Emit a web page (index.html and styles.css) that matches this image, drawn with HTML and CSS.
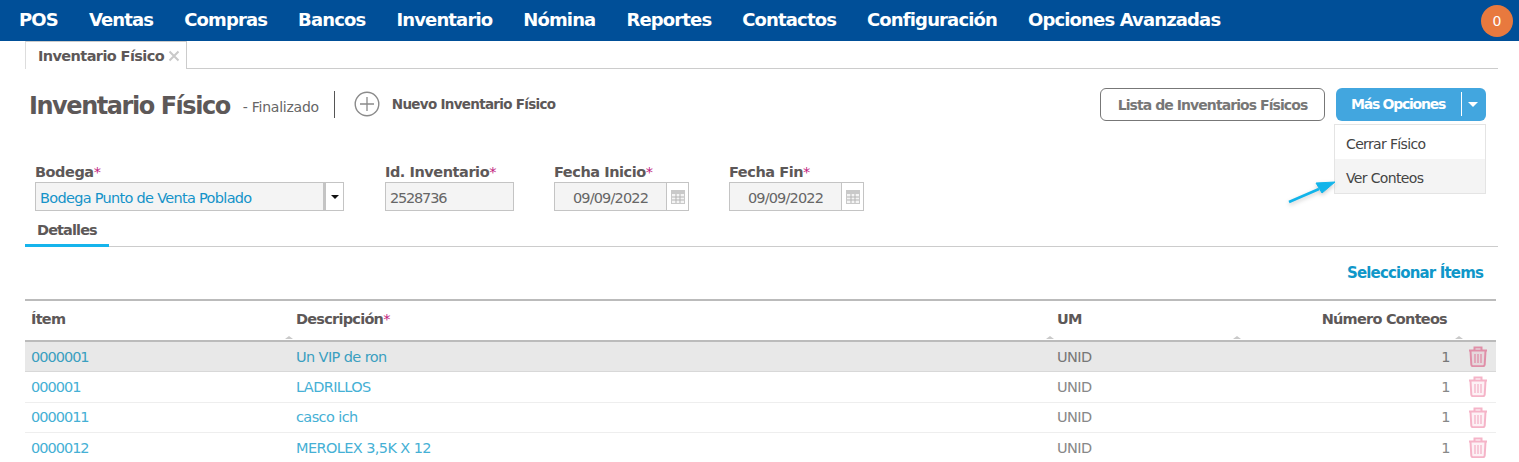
FILE: index.html
```html
<!DOCTYPE html>
<html lang="es">
<head>
<meta charset="utf-8">
<title>Inventario Físico</title>
<link rel="stylesheet" href="styles.css">
</head>
<body>
<nav class="topnav">
  <a>POS</a><a>Ventas</a><a>Compras</a><a>Bancos</a><a>Inventario</a><a>Nómina</a><a>Reportes</a><a>Contactos</a><a>Configuración</a><a>Opciones Avanzadas</a>
  <span class="badge">0</span>
</nav>
<div class="tabbar"><div class="tab">Inventario Físico <svg class="tab-x" viewBox="0 0 12 12" width="12" height="12"><path d="M1.5 1.500l9 9M10.500 1.500l-9 9" stroke="#c9c9c9" stroke-width="2" fill="none"/></svg></div></div>
<header class="head">
  <h1>Inventario Físico</h1>
  <span class="status">- Finalizado</span>
  <span class="sep"></span>
  <svg class="plus" viewBox="0 0 26 26" width="26" height="26"><circle cx="13" cy="13" r="11.800" fill="none" stroke="#8a8a8a" stroke-width="1.400"/><path d="M13 6v14M6 13h14" stroke="#8a8a8a" stroke-width="1.300"/></svg>
  <span class="new">Nuevo Inventario Físico</span>
  <span class="head-actions">
    <button class="btn-outline">Lista de Inventarios Físicos</button>
    <span class="split"><span class="split-label">Más Opciones</span><span class="split-div"></span><span class="caret-w"></span></span>
  </span>
  <div class="menu">
    <div class="menu-item">Cerrar Físico</div>
    <div class="menu-item hover">Ver Conteos</div>
  </div>
  <svg class="arrow" viewBox="0 0 52 26" width="52" height="26"><path d="M2 24L32 11" stroke="#12b4ea" stroke-width="2.600" fill="none"/><path d="M48 4L29 5L35 15Z" fill="#12b4ea" stroke="#12b4ea" stroke-width="1"/></svg>
</header>
<section class="form">
  <div class="field f-bodega">
    <label>Bodega<i>*</i></label>
    <div class="ctl"><span class="val link">Bodega Punto de Venta Poblado</span><span class="sel"><b></b></span></div>
  </div>
  <div class="field f-id">
    <label>Id. Inventario<i>*</i></label>
    <div class="ctl"><span class="val num">2528736</span></div>
  </div>
  <div class="field f-date">
    <label>Fecha Inicio<i>*</i></label>
    <div class="ctl"><span class="val c">09/09/2022</span><span class="cal"><svg viewBox="0 0 14 14" width="14" height="14"><path d="M0 0h14v14H0z" fill="#c9c9c9"/><path d="M1 4h12v9H1z" fill="#f4f4f4"/><path d="M1 7h12M1 10h12M5 4v9M9 4v9" stroke="#b5b5b5"/></svg></span></div>
  </div>
  <div class="field f-date">
    <label>Fecha Fin<i>*</i></label>
    <div class="ctl"><span class="val c">09/09/2022</span><span class="cal"><svg viewBox="0 0 14 14" width="14" height="14"><path d="M0 0h14v14H0z" fill="#c9c9c9"/><path d="M1 4h12v9H1z" fill="#f4f4f4"/><path d="M1 7h12M1 10h12M5 4v9M9 4v9" stroke="#b5b5b5"/></svg></span></div>
  </div>
</section>
<div class="subtabs"><span class="subtab">Detalles</span></div>
<div class="select-row"><a>Seleccionar Ítems</a></div>
<table class="grid">
  <colgroup><col class="c1"><col class="c2"><col class="c3"><col class="c4"><col class="c5"></colgroup>
  <thead>
    <tr><th>Ítem<s></s></th><th>Descripción<i>*</i><s></s></th><th>UM<s></s></th><th class="r">Número Conteos<s></s></th><th></th></tr>
  </thead>
  <tbody>
    <tr class="on"><td class="link num">0000001</td><td class="link">Un VIP de ron</td><td>UNID</td><td class="r">1</td><td><svg class="trash"><use href="#t"/></svg></td></tr>
    <tr><td class="link num">000001</td><td class="link">LADRILLOS</td><td>UNID</td><td class="r">1</td><td><svg class="trash"><use href="#t"/></svg></td></tr>
    <tr><td class="link num">0000011</td><td class="link">casco ich</td><td>UNID</td><td class="r">1</td><td><svg class="trash"><use href="#t"/></svg></td></tr>
    <tr><td class="link num">0000012</td><td class="link">MEROLEX 3,5K X 12</td><td>UNID</td><td class="r">1</td><td><svg class="trash"><use href="#t"/></svg></td></tr>
  </tbody>
</table>
<svg class="defs" width="0" height="0"><symbol id="t" viewBox="0 0 20 21"><path d="M1 4.500h18M6.500 4V1.500h7V4" fill="none" stroke="currentColor" stroke-width="2"/><path d="M2.500 5l.8 13.500q.1 1.700 1.800 1.700h9.800q1.700 0 1.800-1.700L17.500 5" fill="currentColor" fill-opacity=".18" stroke="currentColor" stroke-width="2"/><path d="M7 8v9M10 8v9M13 8v9" stroke="currentColor" stroke-width="1.300"/></symbol></svg>
</body>
</html>
```
FILE: styles.css
```css
* { box-sizing: border-box; }
html, body { margin: 0; height: 462px; overflow: hidden; background: #fff; }
body { font-family: "DejaVu Sans", sans-serif; font-size: 14px; color: #666; letter-spacing: -0.65px; }

.topnav { height: 41px; background: #004f98; display: flex; align-items: center; gap: 31px; padding: 0 6px 2px 19px; position: relative; }
.topnav a { color: #fff; font-size: 18px; font-weight: 700; letter-spacing: -0.86px; }
.badge { margin-left: auto; width: 32px; height: 32px; border-radius: 50%; background: #e8793e; color: #fff; font-size: 14px; display: flex; align-items: center; justify-content: center; margin-top: 2px; letter-spacing: 0; }

.tabbar { height: 28px; margin: 0 21px 0 25px; border-bottom: 1px solid #ccc; }
.tab { width: 162px; height: 28px; border: 1px solid #ccc; border-bottom: 0; border-left-color: #ddd; background: #fff; padding: 1px 0 0 12px; font-size: 14.500px; font-weight: 700; color: #5d5858; letter-spacing: -0.6px; display: flex; align-items: center; gap: 4px; }
.tab-x { margin-top: -1px; }

.head { position: relative; height: 93px; display: flex; align-items: flex-start; padding: 19px 33px 0 29px; }
.head h1 { margin: 0; font-size: 24px; line-height: 36px; font-weight: 700; color: #5d5858; letter-spacing: -1.450px; }
.status { margin: 9px 0 0 13px; line-height: 20px; color: #666; font-size: 14px; letter-spacing: -0.25px; }
.sep { width: 1px; height: 27px; background: #555; margin: 3px 19px 0 15px; }
.plus { margin-top: 3px; }
.new { margin: 6px 0 0 12px; line-height: 20px; font-size: 13.500px; font-weight: 700; color: #5d5858; letter-spacing: -0.7px; }
.head-actions { margin-left: auto; display: flex; gap: 11px; }
.btn-outline { width: 225px; height: 33px; border: 1px solid #777; border-radius: 6px; background: #fff; font: 700 14px "DejaVu Sans", sans-serif; letter-spacing: -0.93px; color: #777; padding: 0; }
.split { width: 150px; height: 33px; background: #42a6df; border-radius: 6px; display: flex; align-items: center; color: #fff; font-weight: 700; font-size: 14px; letter-spacing: -1.250px; padding-bottom: 1px; }
.split-label { margin-left: 15px; width: 110px; }
.split-div { width: 1px; height: 24px; background: #fff; }
.caret-w { width: 0; height: 0; border: 5px solid transparent; border-top-color: #fff; border-bottom: 0; margin-left: 6px; }
.menu { position: absolute; top: 55px; right: 33px; width: 152px; height: 70px; border: 1px solid #e4e4e4; background: #fff; color: #444; z-index: 2; }
.menu-item { height: 34px; padding: 3px 0 0 11px; line-height: 32px; }
.menu-item.hover { background: #f4f4f4; }
.arrow { position: absolute; top: 109px; left: 1287px; z-index: 3; filter: drop-shadow(0 2px 2px rgba(0, 0, 0, .2)); }

.form { display: flex; padding-left: 35px; height: 50px; }
.field label { display: block; height: 20px; line-height: 20px; font-weight: 700; font-size: 14.500px; color: #5d5858; letter-spacing: -0.45px; }
.field i, .grid i { color: #c2237e; font-style: normal; font-weight: 400; }
.ctl { display: flex; height: 29px; border: 1px solid #c4c4c4; background: #fff; }
.val { flex: 1; background: #f4f4f4; padding: 3px 0 0 4px; line-height: 25px; font-size: 14.500px; letter-spacing: -0.7px; }
.val.num { letter-spacing: -1.200px; }
.val.c { text-align: center; border-right: 1px solid #c4c4c4; padding-left: 0; letter-spacing: -0.85px; }
.val.link { color: #1593c9; border-right: 3px solid #c4c4c4; }
.f-bodega { width: 309px; margin-right: 41px; }
.f-id { width: 129px; margin-right: 40px; }
.f-date { width: 135px; margin-right: 40px; }
.f-date .ctl { width: 135px; }
.sel { width: 17px; display: flex; align-items: center; justify-content: center; }
.sel b { border: 4px solid transparent; border-top: 4px solid #111; border-bottom: 0; }
.cal { width: 21px; display: flex; align-items: center; justify-content: center; }
.subtabs { margin: 0 21px 0 25px; height: 35px; border-bottom: 1px solid #ccc; }
.subtab { display: block; width: 84px; height: 35px; padding: 10px 0 0 12px; font-weight: 700; font-size: 14.500px; color: #5d5858; letter-spacing: -0.9px; border-bottom: 3px solid #16b4ec; }
.select-row { height: 52px; padding: 17px 36px 0 0; text-align: right; }
.select-row a { color: #0f97c9; font-weight: 700; font-size: 15px; letter-spacing: -0.85px; }

.grid { margin-left: 25px; width: 1471px; border-collapse: collapse; table-layout: fixed; border-top: 2px solid #bbb; }
.c1 { width: 265px; } .c2 { width: 761px; } .c3 { width: 187px; } .c4 { width: 222px; } .c5 { width: 36px; }
.grid th { height: 41px; text-align: left; padding: 0 0 3px 6px; font-size: 14.500px; font-weight: 700; color: #5d5858; letter-spacing: -0.75px; border-bottom: 2px solid #bbb; position: relative; }
.grid th s { position: absolute; right: -3px; bottom: 1px; border: 4px solid transparent; border-bottom: 3px solid #c9c9c9; border-top: 0; }
.grid th:last-child s { display: none; }
.grid th.r { text-align: right; padding-right: 13px; }
.grid td { height: 30.500px; padding: 0 0 0 6px; border-bottom: 1px solid #eee; font-size: 14.500px; color: #888; letter-spacing: -0.6px; white-space: nowrap; }
.grid td.r { text-align: right; padding-right: 10px; }
.grid td.link { color: #45b0d5; }
.grid td.num { letter-spacing: -1px; }
.grid tr.on td { background: #e8e8e8; border-bottom-color: #d8d8d8; color: #777; }
.grid tr.on td.link { color: #3a9fc0; }
.trash { width: 20px; height: 21px; display: block; margin-left: 2px; color: #f5b4c8; }
.grid tr.on .trash { color: #e08fa8; }
.defs { position: absolute; }
```
